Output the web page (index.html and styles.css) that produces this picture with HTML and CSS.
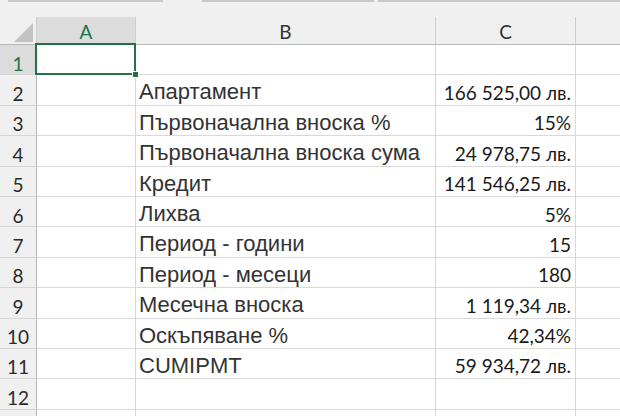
FILE: index.html
```html
<!DOCTYPE html>
<html lang="bg">
<head>
<meta charset="utf-8">
<link rel="stylesheet" href="styles.css">
</head>
<body>
<div class="top">
  <span class="tb tb1"></span><span class="tb tb2"></span><span class="tb tb3"></span>
</div>
<div class="sheet">
  <div class="hd corner"><span class="tri"></span></div>
  <div class="hd col sel">A</div>
  <div class="hd col">B</div>
  <div class="hd col">C</div>
  <div class="hd col last"></div>

  <div class="rh sel">1</div><div class="c a1"><span class="selbox"><span class="handle"></span></span></div><div class="c"></div><div class="c"></div><div class="c e"></div>
  <div class="rh">2</div><div class="c"></div><div class="c t">Апартамент</div><div class="c n">166 525,00 лв.</div><div class="c e"></div>
  <div class="rh">3</div><div class="c"></div><div class="c t">Първоначална вноска %</div><div class="c n">15%</div><div class="c e"></div>
  <div class="rh">4</div><div class="c"></div><div class="c t">Първоначална вноска сума</div><div class="c n">24 978,75 лв.</div><div class="c e"></div>
  <div class="rh">5</div><div class="c"></div><div class="c t">Кредит</div><div class="c n">141 546,25 лв.</div><div class="c e"></div>
  <div class="rh">6</div><div class="c"></div><div class="c t">Лихва</div><div class="c n">5%</div><div class="c e"></div>
  <div class="rh">7</div><div class="c"></div><div class="c t">Период - години</div><div class="c n">15</div><div class="c e"></div>
  <div class="rh">8</div><div class="c"></div><div class="c t">Период - месеци</div><div class="c n">180</div><div class="c e"></div>
  <div class="rh">9</div><div class="c"></div><div class="c t">Месечна вноска</div><div class="c n">1 119,34 лв.</div><div class="c e"></div>
  <div class="rh">10</div><div class="c"></div><div class="c t">Оскъпяване %</div><div class="c n">42,34%</div><div class="c e"></div>
  <div class="rh">11</div><div class="c"></div><div class="c t">CUMIPMT</div><div class="c n">59 934,72 лв.</div><div class="c e"></div>
  <div class="rh">12</div><div class="c"></div><div class="c"></div><div class="c"></div><div class="c e"></div>
  <div class="rh"></div><div class="c"></div><div class="c"></div><div class="c"></div><div class="c e"></div>
</div>
</body>
</html>
```
FILE: styles.css
```css
* { box-sizing: border-box; }
html, body { margin: 0; padding: 0; background: #ffffff; overflow: hidden; }
body { width: 620px; height: 416px; }

.top {
  height: 17px;
  background: #f0f0f0;
  display: flex;
  align-items: flex-start;
  gap: 14px;
  padding-left: 8px;
}
.tb { display: block; height: 2px; background: #c9c9c9; }
.tb1 { width: 155px; }
.tb2 { width: 172px; margin-left: 25px; }
.tb3 { flex: 1; margin-left: -10px; }

.sheet {
  display: grid;
  grid-template-columns: 37px 99px 300px 140px 1fr;
  grid-template-rows: 28px repeat(13, 30.4px);
}

.hd {
  background: #f0f0f0;
  border-bottom: 1px solid #b8b8b8;
  font-family: "Lato", "Open Sans", sans-serif;
  font-size: 19px;
  color: #333;
  display: flex;
  align-items: center;
  justify-content: center;
  padding-top: 1px;
}
.hd.col { border-right: 1px solid #cdcdcd; }
.hd.col.last { border-right: none; }
.hd.corner { border-right: 1px solid #cdcdcd; position: relative; }
.hd.sel { background: #dcdcdc; color: #217346; }
.tri {
  position: absolute;
  right: 3px;
  bottom: 2px;
  width: 0; height: 0;
  border-left: 19px solid transparent;
  border-bottom: 19px solid #c2c2c2;
}

.rh {
  background: #f0f0f0;
  border-right: 1px solid #b8b8b8;
  border-bottom: 1px solid #d6d6d6;
  font-family: "Lato", "Open Sans", sans-serif;
  font-size: 19px;
  line-height: 1.15;
  color: #2a2a2a;
  display: flex;
  align-items: flex-end;
  justify-content: center;
  padding-bottom: 0px;
}
.rh.sel { background: #dcdcdc; color: #217346; }

.c {
  border-right: 1px solid #d9d9d9;
  border-bottom: 1px solid #d9d9d9;
  display: flex;
  align-items: flex-end;
  padding: 0 4px 0 3px;
  white-space: nowrap;
  line-height: 1.15;
}
.c.e { border-right: none; }
.t {
  font-family: "Liberation Sans", Arial, sans-serif;
  font-size: 22px;
  color: #333;
}
.n {
  justify-content: flex-end;
  font-family: "Lato", "Open Sans", sans-serif;
  font-size: 19px;
  color: #1a1a1a;
  padding-bottom: 1px;
}
.a1 { position: relative; }
.selbox {
  position: absolute;
  left: -2px; top: -2px; right: -1px; bottom: -1px;
  border: 2px solid #217346;
}
.handle {
  position: absolute;
  right: -5px; bottom: -5px;
  width: 7px; height: 7px;
  background: #217346;
  border: 1px solid #ffffff;
}
```
